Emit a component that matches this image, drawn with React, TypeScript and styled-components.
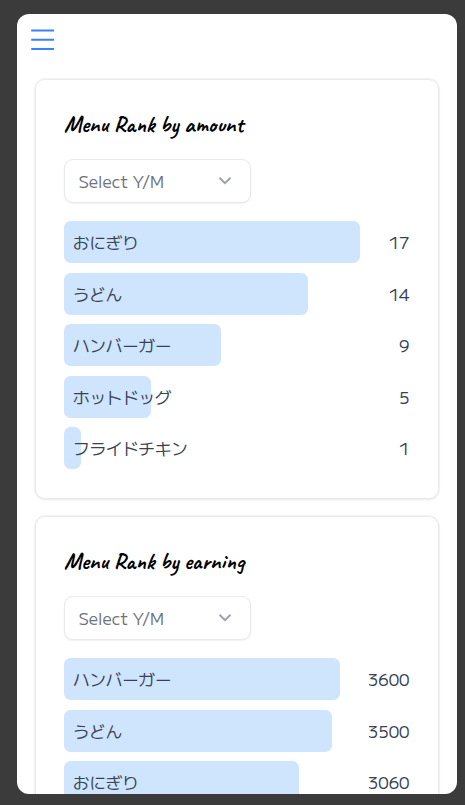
import React from "react";
import styled, { createGlobalStyle } from "styled-components";

const GlobalStyle = createGlobalStyle`
  * { box-sizing: border-box; }
  body {
    margin: 0;
    background: #3b3b3b;
    color: #374151;
    font-family: "M PLUS 1", "Noto Sans", "Noto Sans CJK JP", sans-serif;
    font-weight: 400;
  }
`;

const Backdrop = styled.div`
  height: 805px;
  padding: 14px 8.5px 11px 17px;
  overflow: hidden;
`;

const Screen = styled.main`
  height: 780px;
  overflow: hidden;
  border-radius: 12px;
  background: #fff;
`;

const Header = styled.header`
  height: 64.7px;
  padding: 14px 13px;
`;

const MenuButton = styled.button`
  display: block;
  width: 26px;
  height: 24px;
  padding: 0;
  border: 0;
  background: none;
  svg { display: block; }
`;

const Cards = styled.div`
  display: flex;
  flex-direction: column;
  gap: 17px;
  padding: 0 18px;
`;

const Card = styled.section`
  flex: none;
  height: 420px;
  padding: 32.5px 28px 28px;
  border: 1px solid #e9eaec;
  border-radius: 10px;
  box-shadow: 0 0 0 0.7px #f0f0f2, 0 1px 2px rgba(0, 0, 0, 0.1);
`;

const Title = styled.h2`
  height: 26px;
  margin: 0 0 20.6px;
  color: #000;
  font-family: "Caveat", "Open Sans", sans-serif;
  font-size: 23.3px;
  font-weight: 700;
  line-height: 25px;
  white-space: nowrap;
`;

const Select = styled.button`
  display: flex;
  align-items: center;
  justify-content: space-between;
  width: 187px;
  height: 44px;
  margin-bottom: 18.7px;
  padding: 0 18px 0 13.5px;
  border: 1px solid #e7e9ec;
  border-radius: 9px;
  background: #fff;
  box-shadow: 0 1px 2px rgba(0, 0, 0, 0.06);
  color: #6b7280;
  font-family: inherit;
  font-size: 16.4px;
  text-align: left;
`;

const Rows = styled.div`
  display: flex;
  flex-direction: column;
  gap: 9.45px;
`;

const Row = styled.div`
  display: flex;
  align-items: center;
  justify-content: space-between;
  height: 42px;
  font-size: 16.4px;
  line-height: 24px;
`;

const Bar = styled.div<{ $width: number }>`
  display: flex;
  align-items: center;
  width: ${(p) => p.$width}px;
  height: 42px;
  padding: 0 0 0 9px;
  border-radius: 6.5px;
  background: #cfe5fd;
`;

const Label = styled.span`
  flex: none;
  white-space: nowrap;
`;

const Value = styled.span`
  flex: none;
`;

type Item = { name: string; value: number; width: number };

const ranks: { title: string; items: Item[] }[] = [
  {
    title: "Menu Rank by amount",
    items: [
      { name: "おにぎり", value: 17, width: 296.3 },
      { name: "うどん", value: 14, width: 244 },
      { name: "ハンバーガー", value: 9, width: 156.7 },
      { name: "ホットドッグ", value: 5, width: 87.3 },
      { name: "フライドチキン", value: 1, width: 17.3 },
    ],
  },
  {
    title: "Menu Rank by earning",
    items: [
      { name: "ハンバーガー", value: 3600, width: 276 },
      { name: "うどん", value: 3500, width: 268.3 },
      { name: "おにぎり", value: 3060, width: 234.7 },
    ],
  },
];

function MenuIcon() {
  return (
    <svg width="26" height="24" viewBox="0 0 26 24" fill="none" stroke="#3b82f6" strokeWidth="2">
      <path d="M1.2 2.5h22.8M1.2 11.7h22.8M1.2 21h22.8" />
    </svg>
  );
}

function Chevron() {
  return (
    <svg width="14" height="10" viewBox="0 0 14 10" fill="none" stroke="#9ca3af" strokeWidth="2">
      <path d="M1.5 1.7 7 7.2l5.5-5.5" />
    </svg>
  );
}

export default function App() {
  return (
    <>
      <GlobalStyle />
      <Backdrop>
        <Screen>
          <Header>
            <MenuButton aria-label="Menu">
              <MenuIcon />
            </MenuButton>
          </Header>
          <Cards>
            {ranks.map((rank) => (
              <Card key={rank.title}>
                <Title>{rank.title}</Title>
                <Select>
                  <span>Select Y/M</span>
                  <Chevron />
                </Select>
                <Rows>
                  {rank.items.map((item) => (
                    <Row key={item.name}>
                      <Bar $width={item.width}>
                        <Label>{item.name}</Label>
                      </Bar>
                      <Value>{item.value}</Value>
                    </Row>
                  ))}
                </Rows>
              </Card>
            ))}
          </Cards>
        </Screen>
      </Backdrop>
    </>
  );
}
